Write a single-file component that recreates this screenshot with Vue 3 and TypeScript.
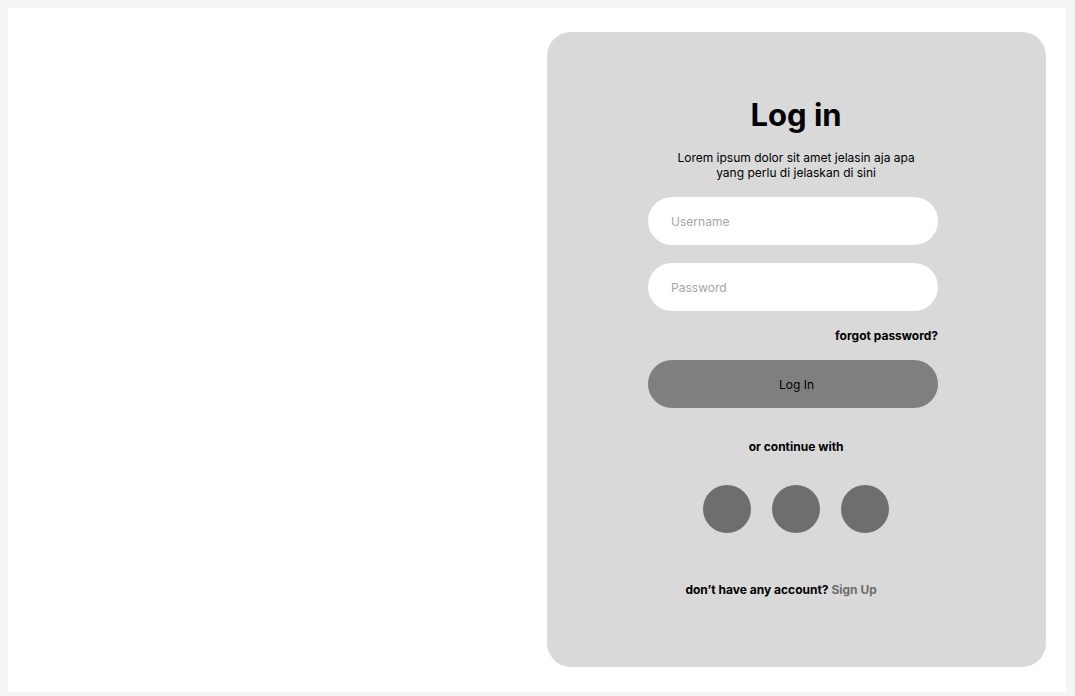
<script setup lang="ts">
import { ref } from 'vue'

const username = ref('')
const password = ref('')
const providers: string[] = ['first provider', 'second provider', 'third provider']
</script>

<template>
  <div class="page">
    <main class="sheet">
      <section class="card">
        <form class="login" @submit.prevent>
          <h1>Log in</h1>
          <p class="intro">Lorem ipsum dolor sit amet jelasin aja apa<br />yang perlu di jelaskan di sini</p>
          <div class="fields">
            <input v-model="username" class="field" type="text" placeholder="Username" aria-label="Username" />
            <input v-model="password" class="field" type="password" placeholder="Password" aria-label="Password" />
            <a class="forgot" href="#">forgot password?</a>
            <button class="submit" type="submit">Log In</button>
          </div>
          <p class="or">or continue with</p>
          <div class="providers">
            <button v-for="name in providers" :key="name" class="provider" type="button" :aria-label="name"></button>
          </div>
          <p class="signup">don’t have any account? <a href="#">Sign Up</a></p>
        </form>
      </section>
    </main>
  </div>
</template>

<style>
body {
  margin: 0;
  background: #f5f5f5;
}
</style>

<style scoped>
.page {
  box-sizing: border-box;
  min-height: 100vh;
  padding: 8px 9px 4px 8px;
  display: flex;
  font-family: Inter, sans-serif;
  font-size: 12px;
  line-height: 15px;
  color: #000;
}
.sheet {
  box-sizing: border-box;
  flex: 1;
  display: flex;
  justify-content: flex-end;
  padding: 24px 20px 25px;
  background: #fff;
}
.card {
  box-sizing: border-box;
  width: 49%;
  min-width: 360px;
  padding: 64px 25px 64px 24px;
  display: flex;
  justify-content: center;
  align-items: flex-start;
  border-radius: 24px;
  background: #d9d9d9;
}
.login {
  width: 296px;
}
h1,
p {
  margin: 0;
  text-align: center;
}
h1 {
  font-size: 31px;
  line-height: 38px;
  font-weight: 700;
}
.intro {
  margin-top: 16px;
}
.fields {
  display: flex;
  flex-direction: column;
  gap: 18px;
  margin: 17px 6px 0 0;
}
.field,
.submit {
  box-sizing: border-box;
  width: 100%;
  height: 48px;
  padding: 0 23px;
  border: 0;
  border-radius: 24px;
  font: inherit;
  color: #000;
}
.field {
  background: #fff;
}
.field::placeholder {
  color: #a6a6a6;
  opacity: 1;
}
.forgot {
  align-self: flex-end;
  margin: -1px 0;
  font-weight: 700;
  color: #000;
  text-decoration: none;
}
.submit {
  padding-left: 30px;
  background: #7f7f7f;
  cursor: pointer;
}
.or {
  margin-top: 31px;
  font-weight: 700;
}
.providers {
  display: flex;
  justify-content: center;
  gap: 21px;
  margin-top: 31px;
}
.provider {
  width: 48px;
  height: 48px;
  padding: 0;
  border: 0;
  border-radius: 50%;
  background: #6e6e6e;
  cursor: pointer;
}
.signup {
  margin-top: 49px;
  padding-right: 30px;
  font-weight: 700;
}
.signup a {
  color: #6e6e6e;
  text-decoration: none;
}
</style>
